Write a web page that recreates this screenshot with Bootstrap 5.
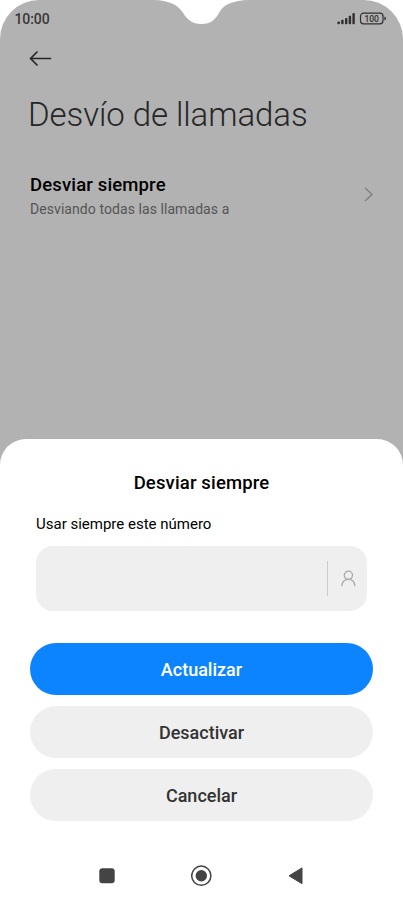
<!DOCTYPE html>
<html lang="es">
<head>
<meta charset="utf-8">
<meta name="viewport" content="width=device-width, initial-scale=1">
<title>Desvío de llamadas</title>
<link href="https://cdn.jsdelivr.net/npm/bootstrap@5.3.0/dist/css/bootstrap.min.css" rel="stylesheet">
<style>
body{font-family:Roboto,"Liberation Sans",sans-serif;background:#fff;color:#000}
svg{display:block}
.phone{width:403px;height:900px}
.backdrop{height:480px;background:#b2b2b2;border-radius:39px 39px 0 0;color:#262626}
.notch{left:154px;top:0}
.status{height:38px;padding:0 16px 0 14.500px}
.clock{font-size:14px;line-height:38px;font-weight:500;letter-spacing:-.1px;color:#383838}
.back{padding:13px 0 0 29px}
.screen-title{font-size:33px;line-height:40px;font-weight:300;margin:28px 0 0 28px;letter-spacing:-.07px;white-space:nowrap}
.setting{margin-top:38px;padding:0 30px}
.setting-name{font-size:18.500px;line-height:24px;font-weight:500;letter-spacing:.15px;color:#000}
.setting-note{font-size:14px;line-height:20px;letter-spacing:.07px;color:#555;margin-top:1.500px}
.setting-arrow{margin-bottom:2px}
.sheet{margin-top:-41px;height:461px;border-radius:26px 26px 0 0;padding:32px 30px 0}
.sheet-title{font-size:18.500px;line-height:24px;font-weight:500;letter-spacing:.15px}
.field-label{font-size:15px;line-height:20px;margin:19px 6px 0}
.number-field{height:64.500px;margin:12px 6px 0;padding-right:9px;background:#efefef;border-radius:17px}
.divider{width:1px;height:35px;background:#ccc;margin-right:11px}
.contact{margin-top:1px}
.actions{margin-top:32.500px;gap:11px}
.pill,.pill:hover{height:52px;padding:8px 0 6px;border:0;font-size:18px;line-height:24px;font-weight:500;background:#efefef;color:#333}
.pill-main,.pill-main:hover{background:#0d84ff;color:#fff}
.system-nav{margin-top:43.500px;padding:0 70px 0 69px}
</style>
<script src="https://cdn.jsdelivr.net/npm/bootstrap@5.3.0/dist/js/bootstrap.bundle.min.js"></script>
</head>
<body>
<div class="phone position-relative overflow-hidden">
  <main class="backdrop">
    <svg class="notch position-absolute" width="96" height="25" viewBox="0 0 96 25"><path d="M0 0C14 .5 23 4 28.500 12C33 19.500 38 24 47.500 24C57 24 61.500 19.500 65.500 12C70 4 80 .5 94 0Z" fill="#fff"/></svg>
    <div class="status d-flex justify-content-between align-items-center">
      <span class="clock">10:00</span>
      <svg width="51" height="14" viewBox="0 0 51 14" fill="#303030">
        <rect x="1.500" y="9.500" width="2.400" height="2.800" rx=".8"/><rect x="5.200" y="7.800" width="2.400" height="4.500" rx=".8"/><rect x="9" y="6" width="2.400" height="6.300" rx=".8"/><rect x="12.700" y="3.800" width="2.400" height="8.500" rx=".8"/><rect x="16.400" y="1" width="2.400" height="11.300" rx=".8"/>
        <rect x="24.500" y="1.200" width="22.500" height="10.600" rx="3" fill="none" stroke="#303030" stroke-width="1.200"/><path d="M48.400 4.500Q50 5 50 6.500T48.400 8.500Z"/>
        <text x="35.700" y="9.800" text-anchor="middle" font-size="8.500" font-weight="500" textLength="14.500" lengthAdjust="spacingAndGlyphs">100</text>
      </svg>
    </div>
    <div class="back"><svg width="24" height="16" viewBox="0 0 24 16" fill="none" stroke="#262626" stroke-width="1.700" stroke-linecap="round" stroke-linejoin="round"><path d="M21.500 7.500H1.500M8 1L1.500 7.500L8 14"/></svg></div>
    <h1 class="screen-title">Desvío de llamadas</h1>
    <div class="setting d-flex justify-content-between align-items-center">
      <div><div class="setting-name">Desviar siempre</div><div class="setting-note">Desviando todas las llamadas a</div></div>
      <svg class="setting-arrow" width="9" height="16" viewBox="0 0 9 16" fill="none" stroke="#7c7c7c" stroke-width="1.200"><path d="M1 1L8 7.500L1 14"/></svg>
    </div>
  </main>
  <section class="sheet bg-white position-relative">
    <h2 class="sheet-title text-center mb-0">Desviar siempre</h2>
    <label class="field-label d-block">Usar siempre este número</label>
    <div class="number-field d-flex align-items-center justify-content-end">
      <span class="divider"></span>
      <svg class="contact" width="19" height="18" viewBox="0 0 19 18" fill="none" stroke="#a9a9a9" stroke-width="1.300" stroke-linecap="round"><circle cx="9.400" cy="5.300" r="4.100"/><path d="M2.900 15.700C3.300 12 5.600 9.400 9.400 9.400S15.500 12 15.900 15.700"/></svg>
    </div>
    <div class="actions d-flex flex-column">
      <button class="btn pill pill-main rounded-pill w-100">Actualizar</button>
      <button class="btn pill rounded-pill w-100">Desactivar</button>
      <button class="btn pill rounded-pill w-100">Cancelar</button>
    </div>
    <nav class="system-nav d-flex justify-content-between align-items-center">
      <svg width="16" height="16" viewBox="0 0 16 16"><rect x=".3" y=".3" width="15.400" height="15" rx="3" fill="#444"/></svg>
      <svg width="22" height="22" viewBox="0 0 22 22"><circle cx="10.300" cy="10.700" r="9.600" fill="none" stroke="#444" stroke-width="1.500"/><circle cx="10.300" cy="10.700" r="5.700" fill="#444"/></svg>
      <svg width="15" height="18" viewBox="0 0 15 18"><path d="M1 8.800L14 .9V16.700Z" fill="#444" stroke="#444" stroke-linejoin="round"/></svg>
    </nav>
  </section>
</div>
</body>
</html>
